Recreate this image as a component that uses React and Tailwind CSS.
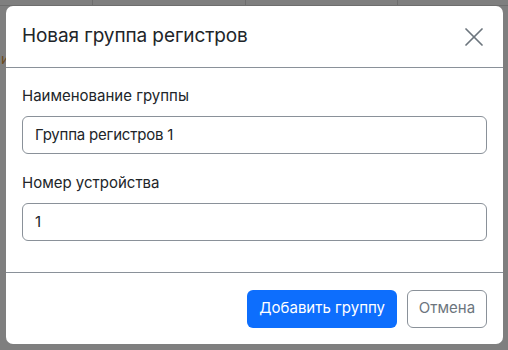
import { X } from 'lucide-react';

const fields = [
    { label: 'Наименование группы', value: 'Группа регистров 1' },
    { label: 'Номер устройства', value: '1' },
];

export default function App() {
    return (
        <div
            className="relative h-[350px] w-[508px] overflow-hidden bg-[#7f7f7f] p-[6px]"
            style={{ fontFamily: 'Inter, "Noto Sans", sans-serif' }}
        >
            {/* Page behind the backdrop */}
            <div aria-hidden="true" className="absolute inset-0">
                <div className="absolute left-0 right-0 top-[5px] h-px bg-[#6e6e6e]" />
                <div className="absolute left-[92px] top-0 h-[5px] w-px bg-[#6e6e6e]" />
                <div className="absolute left-[245px] top-0 h-[5px] w-px bg-[#6e6e6e]" />
                <div className="absolute left-[397px] top-0 h-[5px] w-px bg-[#6e6e6e]" />
                <span className="absolute left-[1px] top-[52px] text-[14px] leading-none text-[#6b4a1e]">
                    и
                </span>
            </div>

            {/* Modal */}
            <div className="relative flex h-[338px] w-[497px] flex-col rounded-[7px] bg-white text-[#212529]">
                <div className="flex h-[62px] items-center justify-between border-b border-[#8a9199] pl-4 pr-[13px]">
                    <h5 className="text-[19px] font-normal leading-normal tracking-[-0.1px]">
                        Новая группа регистров
                    </h5>
                    <X size={32} strokeWidth={1.3} className="text-[#6c757d]" />
                </div>

                <div className="flex flex-1 flex-col px-4 pt-4">
                    {fields.map((f, i) => (
                        <div key={f.label} className={i > 0 ? 'mt-[17px]' : ''}>
                            <label className="block text-[15px] leading-[23px]">
                                {f.label}
                            </label>
                            <div className="mt-[9px] flex h-[38px] items-center rounded-[6px] border border-[#8a9199] px-3 text-[15px] tracking-[-0.2px]">
                                {f.value}
                            </div>
                        </div>
                    ))}
                </div>

                <div className="flex h-[72px] items-center justify-end gap-[10px] border-t border-[#8a9199] px-4">
                    <button className="h-[38px] rounded-[6px] bg-[#0d6efd] px-[12px] text-[15px] text-white">
                        Добавить группу
                    </button>
                    <button className="h-[38px] w-[80px] rounded-[6px] border border-[#8a9199] text-[15px] text-[#6c757d]">
                        Отмена
                    </button>
                </div>
            </div>
        </div>
    );
}
